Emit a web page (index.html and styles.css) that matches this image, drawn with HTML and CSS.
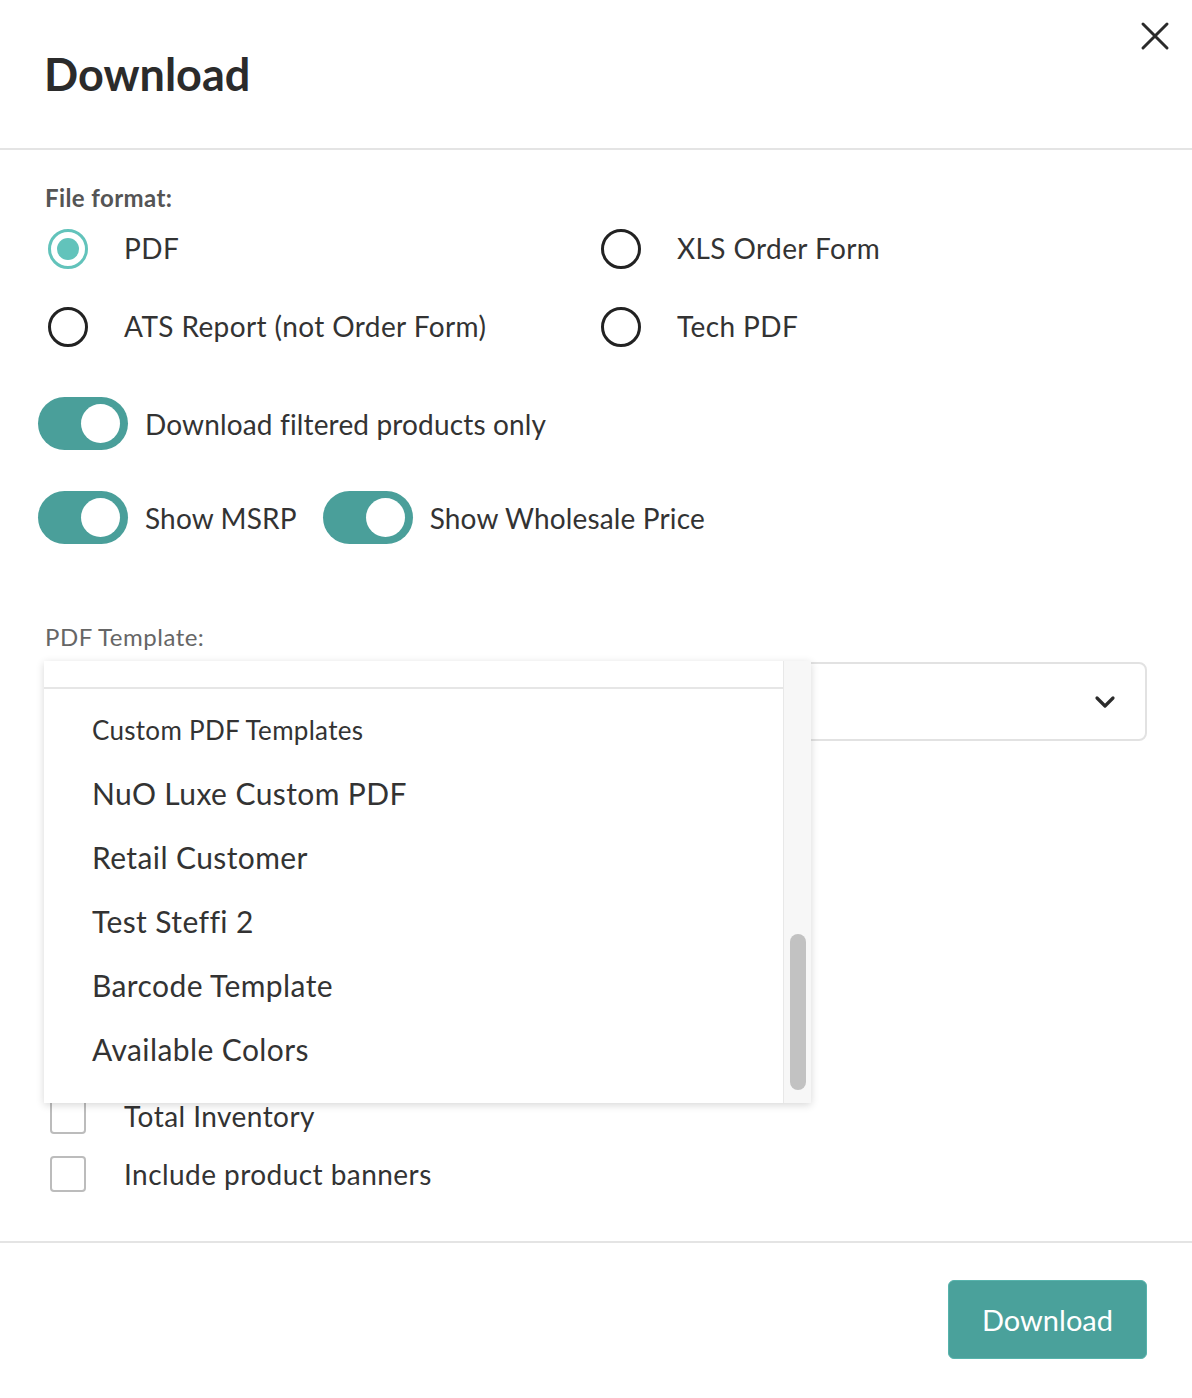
FILE: index.html
```html
<!DOCTYPE html>
<html lang="en">
<head>
  <meta charset="UTF-8">
  <meta name="viewport" content="width=device-width, initial-scale=1.0">
  <title>Download</title>
  <link rel="stylesheet" href="styles.css">
</head>
<body>

  <div class="modal">
    <div class="modal-header">
      <h2>Download</h2>
      <button class="close-btn" aria-label="Close">
        <svg width="30" height="30" viewBox="0 0 30 30">
          <path d="M3 3 L27 27 M27 3 L3 27" stroke="#2b2b2b" stroke-width="3" stroke-linecap="round" fill="none"/>
        </svg>
      </button>
    </div>

    <div class="modal-body">
      <p class="field-label">File format:</p>
      <div class="format-grid">
        <label class="radio-row"><span class="radio checked"></span>PDF</label>
        <label class="radio-row"><span class="radio"></span>XLS Order Form</label>
        <label class="radio-row"><span class="radio"></span>ATS Report (not Order Form)</label>
        <label class="radio-row"><span class="radio"></span>Tech PDF</label>
      </div>

      <div class="toggle-row first">
        <label class="toggle-item"><span class="toggle"><span class="knob"></span></span>Download filtered products only</label>
      </div>
      <div class="toggle-row">
        <label class="toggle-item"><span class="toggle"><span class="knob"></span></span>Show MSRP</label>
        <label class="toggle-item"><span class="toggle"><span class="knob"></span></span>Show Wholesale Price</label>
      </div>

      <p class="template-label">PDF Template:</p>
      <div class="select-wrap">
        <div class="select">
          <svg width="22" height="14" viewBox="0 0 22 14">
            <path d="M3 3 L11 11 L19 3" stroke="#2b2b2b" stroke-width="3.2" stroke-linecap="round" stroke-linejoin="round" fill="none"/>
          </svg>
        </div>

        <div class="dropdown">
          <div class="dropdown-list">
            <div class="dropdown-search"></div>
            <div class="dropdown-group">Custom PDF Templates</div>
            <div class="dropdown-item">NuO Luxe Custom PDF</div>
            <div class="dropdown-item">Retail Customer</div>
            <div class="dropdown-item">Test Steffi 2</div>
            <div class="dropdown-item">Barcode Template</div>
            <div class="dropdown-item">Available Colors</div>
          </div>
          <div class="scroll-track">
            <div class="scroll-thumb"></div>
          </div>
        </div>
      </div>

      <div class="check-list">
        <label class="check-row"><span class="checkbox"></span>Total Inventory</label>
        <label class="check-row"><span class="checkbox"></span>Include product banners</label>
      </div>
    </div>

    <div class="modal-footer">
      <button class="btn-download">Download</button>
    </div>
  </div>

</body>
</html>
```

FILE: styles.css
```css
body {
  margin: 0;
  font-family: 'Lato', 'Open Sans', sans-serif;
  font-variant-ligatures: none;
  background-color: #fff;
  color: #333;
}

.modal {
  width: 1192px;
  height: 1398px;
  overflow: hidden;
}

.modal-header {
  display: flex;
  justify-content: space-between;
  align-items: center;
  height: 148px;
  padding: 0 22px 0 44px;
  border-bottom: 2px solid #e4e4e4;
}

.modal-header h2 {
  margin: 0;
  font-size: 45px;
  font-weight: 700;
  line-height: 1;
  color: #2b2b2b;
}

.close-btn {
  align-self: flex-start;
  margin-top: 21px;
  padding: 0;
  border: none;
  background: none;
  cursor: pointer;
}

.close-btn svg {
  display: block;
}

.modal-body {
  padding: 0 45px 38px;
  border-bottom: 2px solid #e4e4e4;
}

.field-label {
  margin: 36px 0 0;
  font-size: 24px;
  font-weight: 700;
  line-height: 24px;
  letter-spacing: 0.4px;
  color: #555;
}

.format-grid {
  display: grid;
  grid-template-columns: 553px 1fr;
  grid-auto-rows: 78px;
}

.radio-row {
  display: flex;
  align-items: center;
  padding-bottom: 2px;
  font-size: 28px;
  letter-spacing: 0.4px;
  color: #333;
}

.radio {
  box-sizing: border-box;
  width: 40px;
  height: 40px;
  margin: 2px 36px 0 3px;
  border: 3px solid #222;
  border-radius: 50%;
  display: flex;
  align-items: center;
  justify-content: center;
}

.radio.checked {
  border-color: #62c3bb;
}

.radio.checked::after {
  content: "";
  width: 22px;
  height: 22px;
  border-radius: 50%;
  background-color: #62c3bb;
}

.toggle-row {
  display: flex;
  align-items: center;
  gap: 26px;
  height: 53px;
  margin-top: 41px;
  margin-left: -7px;
}

.toggle-row.first {
  margin-top: 31px;
}

.toggle-item {
  display: flex;
  align-items: center;
  font-size: 28px;
  letter-spacing: 0.15px;
  color: #333;
}

.toggle {
  box-sizing: border-box;
  position: relative;
  width: 90px;
  height: 53px;
  margin-right: 17px;
  border-radius: 27px;
  background-color: #4a9f9a;
}

.knob {
  position: absolute;
  top: 7px;
  right: 8px;
  width: 39px;
  height: 39px;
  border-radius: 50%;
  background-color: #fff;
}

.template-label {
  margin: 80px 0 0;
  font-size: 24px;
  line-height: 26px;
  letter-spacing: 0.5px;
  color: #666;
}

.select-wrap {
  position: relative;
  margin-top: 12px;
}

.select {
  box-sizing: border-box;
  height: 79px;
  padding-right: 29px;
  border: 2px solid #e2e2e2;
  border-radius: 8px;
  display: flex;
  align-items: center;
  justify-content: flex-end;
}

.dropdown {
  position: absolute;
  top: -1px;
  left: -1px;
  width: 767px;
  height: 442px;
  display: flex;
  background-color: #fff;
  box-shadow: 0 2px 8px rgba(0, 0, 0, 0.16);
  overflow: hidden;
  z-index: 2;
}

.dropdown-list {
  flex: 1;
}

.dropdown-search {
  height: 26px;
  border-bottom: 2px solid #e6e6e6;
}

.dropdown-group {
  height: 62px;
  padding: 10px 0 0 48px;
  font-size: 26px;
  line-height: 62px;
  letter-spacing: 0.3px;
  color: #333;
}

.dropdown-item {
  height: 64px;
  padding-left: 48px;
  font-size: 30px;
  line-height: 64px;
  letter-spacing: 0.4px;
  color: #333;
}

.scroll-track {
  width: 27px;
  border-left: 1px solid #e8e8e8;
  background-color: #f7f7f7;
}

.scroll-thumb {
  width: 16px;
  height: 156px;
  margin: 273px 0 0 6px;
  border-radius: 8px;
  background-color: #c2c2c2;
}

.check-list {
  margin-top: 346px;
}

.check-row {
  display: flex;
  align-items: center;
  height: 58px;
  font-size: 28px;
  letter-spacing: 0.45px;
  color: #333;
}

.checkbox {
  box-sizing: border-box;
  width: 36px;
  height: 36px;
  margin: 0 38px 0 5px;
  border: 2px solid #bcbcbc;
  border-radius: 4px;
}

.modal-footer {
  display: flex;
  justify-content: flex-end;
  padding: 37px 45px 0;
}

.btn-download {
  box-sizing: border-box;
  width: 199px;
  height: 79px;
  border: 1px solid #57b3ac;
  border-radius: 6px;
  background-color: #4aa19b;
  color: #fff;
  font-family: 'Lato', 'Open Sans', sans-serif;
  font-size: 29px;
  cursor: pointer;
}
```
